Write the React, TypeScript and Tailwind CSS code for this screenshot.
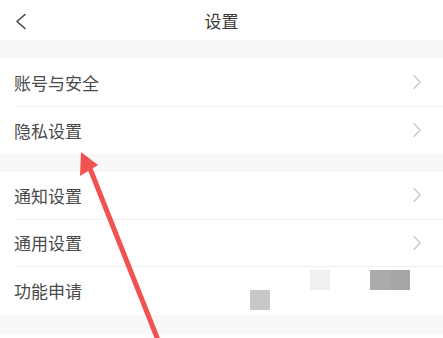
const font = { fontFamily: '"Noto Sans CJK SC", "Noto Sans", sans-serif' };

const ChevronRight = () => (
  <svg width="10" height="16" viewBox="0 0 10 16" fill="none">
    <path d="M2 1.5 L8 8 L2 14.5" stroke="#c8c8c8" strokeWidth="1.4" strokeLinecap="round" strokeLinejoin="round" />
  </svg>
);

const Row = ({ label, last, arrow = true }: { label: string; last?: boolean; arrow?: boolean }) => (
  <div className="pl-[14px] bg-white">
    <div className={`flex items-center justify-between h-[47.5px] pr-[21px] ${last ? '' : 'border-b border-[#efefef]'}`}>
      <span className="text-[17px] text-[#4a4a4a] leading-none">{label}</span>
      {arrow && <ChevronRight />}
    </div>
  </div>
);

export default function App() {
  return (
    <div className="relative w-[443px] h-[338px] overflow-hidden bg-[#f8f8f8]" style={font}>
      <div className="relative h-[40px] bg-white flex items-center justify-center">
        <svg className="absolute left-[14px] top-[13px]" width="14" height="17" viewBox="0 0 14 17" fill="none">
          <path d="M11 1.5 L3 8.5 L11 15.5" stroke="#444" strokeWidth="1.6" strokeLinecap="round" strokeLinejoin="round" />
        </svg>
        <span className="text-[17px] text-[#3a3a3a] leading-none">设置</span>
      </div>
      <div className="h-[19px]" />
      <Row label="账号与安全" />
      <Row label="隐私设置" last />
      <div className="h-[18px]" />
      <Row label="通知设置" />
      <Row label="通用设置" />
      <Row label="功能申请" last arrow={false} />
      <div className="h-[19px]" />
      <div className="h-[10px] bg-white" />

      <div className="absolute left-[250px] top-[290px] w-[20px] h-[20px] bg-[#c8c8c8]" />
      <div className="absolute left-[310px] top-[270px] w-[20px] h-[20px] bg-[#f0f0f0]" />
      <div className="absolute left-[370px] top-[270px] w-[20px] h-[20px] bg-[#ababab]" />
      <div className="absolute left-[390px] top-[270px] w-[20px] h-[20px] bg-[#a6a6a6]" />

      <svg className="absolute left-0 top-0 pointer-events-none" width="443" height="338" viewBox="0 0 443 338">
        <line x1="158" y1="340" x2="89" y2="166" stroke="#f05252" strokeWidth="5" />
        <polygon points="81,152 80,176 98,165" fill="#f05252" />
      </svg>
    </div>
  );
}
